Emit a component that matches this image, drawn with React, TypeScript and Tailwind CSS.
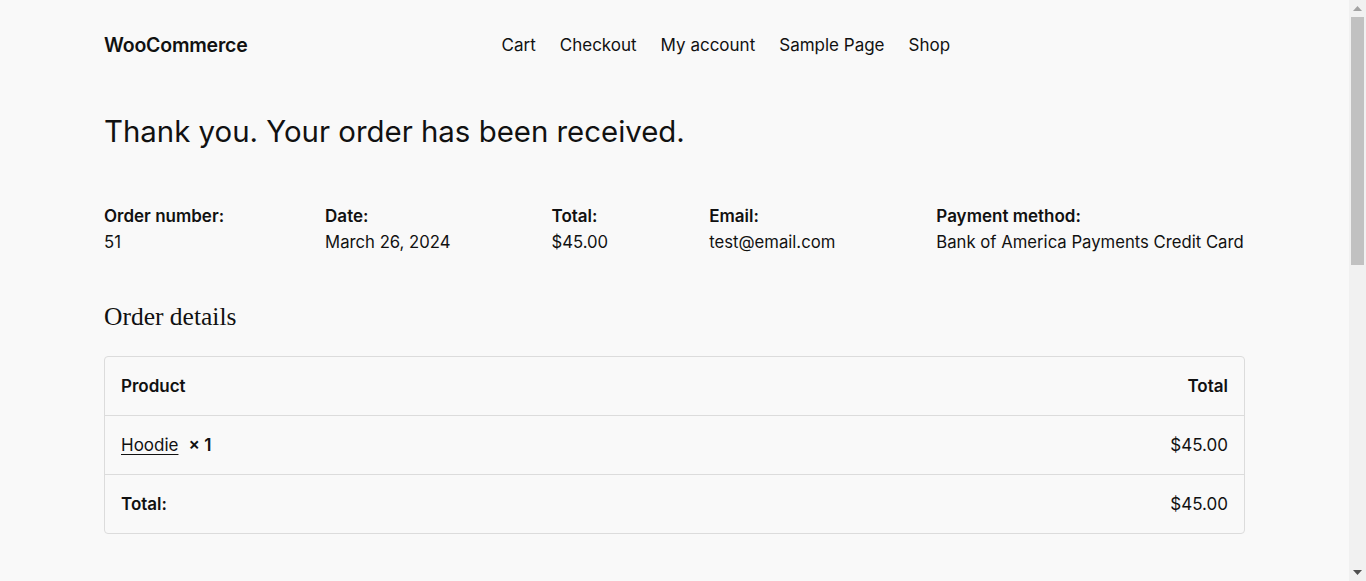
const NAV_LINKS = ['Cart', 'Checkout', 'My account', 'Sample Page', 'Shop']

const OVERVIEW = [
  { label: 'Order number:', value: '51' },
  { label: 'Date:', value: 'March 26, 2024' },
  { label: 'Total:', value: '$45.00' },
  { label: 'Email:', value: 'test@email.com' },
  { label: 'Payment method:', value: 'Bank of America Payments Credit Card' },
]

function Scrollbar() {
  return (
    <div className="w-[17px] shrink-0 bg-[#f1f1f1] flex flex-col items-center">
      <div className="h-[17px] flex items-center justify-center">
        <svg width="9" height="5" viewBox="0 0 9 5"><path d="M0 5 L4.5 0 L9 5 Z" fill="#a3a3a3" /></svg>
      </div>
      <div className="w-[13px] h-[248px] bg-[#c1c1c1]" />
      <div className="flex-1" />
      <div className="h-[17px] flex items-center justify-center">
        <svg width="9" height="5" viewBox="0 0 9 5"><path d="M0 0 L9 0 L4.5 5 Z" fill="#505050" /></svg>
      </div>
    </div>
  )
}

export default function App() {
  return (
    <div className="h-screen overflow-hidden flex bg-[#f9f9f9] text-[#111111] font-['Inter','Liberation_Sans',sans-serif]">
      <main className="flex-1 min-w-0">
        <div className="max-w-[1141px] mx-auto">
          {/* Header */}
          <header className="h-[92px] flex items-center">
            <a href="#" className="text-[19.5px] font-semibold tracking-[-0.2px]">WooCommerce</a>
            <nav className="ml-[254px] flex items-center gap-6 text-[17px]">
              {NAV_LINKS.map(link => (
                <a key={link} href="#">{link}</a>
              ))}
            </nav>
          </header>

          {/* Title */}
          <h1 className="mt-[22px] text-[29.4px] leading-[36px] font-normal">
            Thank you. Your order has been received.
          </h1>

          {/* Overview */}
          <ul className="mt-[53px] flex gap-[101px]">
            {OVERVIEW.map(item => (
              <li key={item.label} className="flex flex-col shrink-0 whitespace-nowrap">
                <span className="text-[17px] leading-[26px] font-semibold">{item.label}</span>
                <span className="text-[16.7px] leading-[26px]">{item.value}</span>
              </li>
            ))}
          </ul>

          {/* Order details */}
          <h2 className="mt-[46px] font-['Liberation_Serif',serif] text-[25.5px] leading-[32px] font-normal">
            Order details
          </h2>

          <div className="mt-[23px] border border-[#dcdcdc] rounded-[4px] text-[17px]">
            <div className="h-[59px] pt-[2px] flex items-center justify-between px-4 border-b border-[#dcdcdc] font-semibold">
              <span>Product</span>
              <span>Total</span>
            </div>
            <div className="h-[59px] pt-[2px] flex items-center justify-between px-4 border-b border-[#dcdcdc]">
              <span className="flex items-center gap-[10px]">
                <a href="#" className="underline underline-offset-[3px]">Hoodie</a>
                <strong className="font-semibold">× 1</strong>
              </span>
              <span>$45.00</span>
            </div>
            <div className="h-[58px] pt-[2px] flex items-center justify-between px-4">
              <span className="font-semibold">Total:</span>
              <span>$45.00</span>
            </div>
          </div>
        </div>
      </main>
      <Scrollbar />
    </div>
  )
}
